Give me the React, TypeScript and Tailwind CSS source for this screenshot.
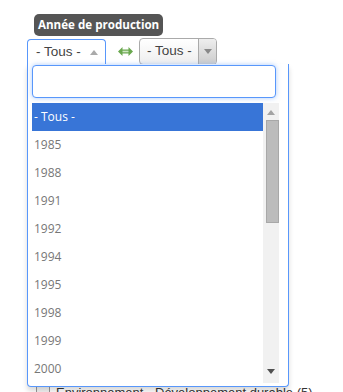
const years = ['- Tous -', '1985', '1988', '1991', '1992', '1994', '1995', '1998', '1999', '2000']

function Triangle({ up, className }: { up?: boolean; className?: string }) {
    return (
        <svg width="8" height="5" viewBox="0 0 8 5" className={className}>
            <polygon points={up ? '0,5 8,5 4,0' : '0,0 8,0 4,5'} fill="currentColor" />
        </svg>
    )
}

export default function App() {
    return (
        <div className="relative w-[343px] h-[392px] overflow-hidden bg-white font-['Open_Sans',sans-serif]">
            {/* label */}
            <div className="ml-[34px] mt-[14px] inline-flex h-[22px] items-center rounded-[5px] bg-[#555] px-[4px] text-[11.6px] font-bold text-white">
                Année de production
            </div>

            {/* range selects */}
            <div className="ml-[27px] mt-[2px] flex items-center">
                <div className="flex h-[26px] w-[79px] items-center justify-between rounded-t-[4px] border border-b-0 border-[#5897fb] bg-white pl-[8px] pr-[7px] font-['Liberation_Sans',sans-serif] text-[13.5px] text-[#444]">
                    <span>- Tous -</span>
                    <Triangle up className="text-[#aaa]" />
                </div>
                <svg width="15" height="9" viewBox="0 0 15 9" className="ml-[12px] mr-[6px]">
                    <path d="M0 4.5 L4.5 0 V2.5 H10.5 V0 L15 4.5 L10.5 9 V6.5 H4.5 V9 Z" fill="#6aa84f" />
                    <rect x="4.5" y="3.7" width="6" height="1.6" fill="#cfe6c4" />
                </svg>
                <div className="flex h-[27px] w-[78px] items-stretch overflow-hidden rounded-[4px] border border-[#aaa] bg-gradient-to-b from-white to-[#eee] font-['Liberation_Sans',sans-serif] text-[13.5px] text-[#444]">
                    <div className="flex flex-1 items-center pl-[7px]">- Tous -</div>
                    <div className="flex w-[18px] items-center justify-center border-l border-[#aaa] bg-gradient-to-b from-[#eee] to-[#ccc]">
                        <Triangle className="text-[#888]" />
                    </div>
                </div>
            </div>

            {/* content behind dropdown */}
            <div className="absolute left-[36px] top-[384px] flex items-start gap-[6px] text-[13px] text-[#333]">
                <div className="h-[14px] w-[14px] border border-[#999] bg-[#f4f4f4]" />
                <span className="-mt-[1px] font-['Liberation_Sans',sans-serif]">Environnement - Développement durable (5)</span>
            </div>

            {/* dropdown */}
            <div className="absolute left-[27px] top-[64px] z-10 h-[323px] w-[262px] rounded-b-[4px] border border-t-0 border-[#5897fb] bg-white shadow-[0_4px_5px_rgba(0,0,0,0.15)]">
                <div className="ml-[4px] mt-[1px] h-[33px] w-[244px] rounded-[4px] border border-[#5897fb] bg-white shadow-[0_0_5px_rgba(88,151,251,0.5)]" />
                <div className="ml-[4px] mt-[5px] flex h-[280px] w-[247px]">
                    <ul className="w-[231px]">
                        {years.map((y, i) => (
                            <li
                                key={y}
                                className={`flex h-[28px] items-center pl-[2px] text-[12px] ${i === 0 ? 'bg-[#3875d7] text-white' : 'text-[#777]'}`}
                            >
                                {y}
                            </li>
                        ))}
                    </ul>
                    <div className="relative w-[16px] bg-[#f1f1f1]">
                        <Triangle up className="absolute left-[4px] top-[7px] text-[#a3a3a3]" />
                        <div className="absolute left-[3px] top-[17px] h-[103px] w-[13px] border border-[#a8a8a8] bg-[#bcbcbc]" />
                        <Triangle className="absolute bottom-[9px] left-[4px] text-[#505050]" />
                    </div>
                </div>
            </div>
        </div>
    )
}
